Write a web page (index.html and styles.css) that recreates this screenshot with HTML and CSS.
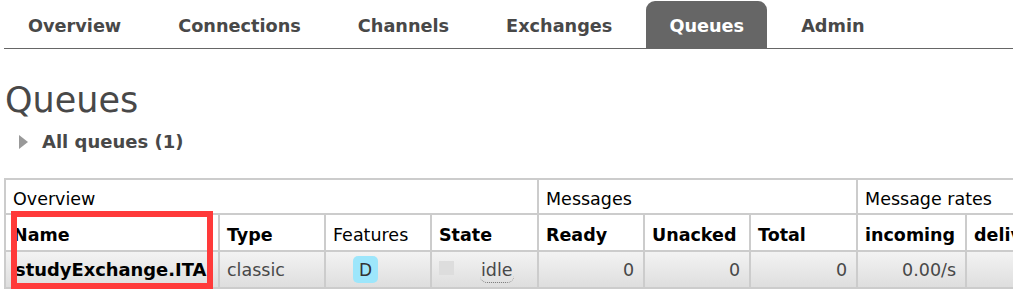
FILE: index.html
```html
<!DOCTYPE html>
<html lang="en">
<head>
  <meta charset="UTF-8" />
  <title>Queues</title>
  <link rel="stylesheet" href="styles.css">
</head>
<body>

  <ul class="tabs">
    <li>Overview</li>
    <li>Connections</li>
    <li>Channels</li>
    <li>Exchanges</li>
    <li class="active">Queues</li>
    <li>Admin</li>
  </ul>

  <h1>Queues</h1>

  <div class="section-title">
    <span class="arrow"></span>
    <span>All queues (1)</span>
  </div>

  <div class="table-wrap">
    <table class="queues">
      <colgroup>
        <col style="width:214px">
        <col style="width:106px">
        <col style="width:106px">
        <col style="width:107px">
        <col style="width:106px">
        <col style="width:106px">
        <col style="width:107px">
        <col style="width:109px">
        <col style="width:150px">
      </colgroup>
      <thead>
        <tr class="group">
          <th colspan="4">Overview</th>
          <th colspan="3">Messages</th>
          <th colspan="2">Message rates</th>
        </tr>
        <tr class="cols">
          <th>Name</th>
          <th>Type</th>
          <th class="plain">Features</th>
          <th>State</th>
          <th>Ready</th>
          <th>Unacked</th>
          <th>Total</th>
          <th>incoming</th>
          <th>deliver / get</th>
        </tr>
      </thead>
      <tbody>
        <tr>
          <td class="name">studyExchange.ITA</td>
          <td>classic</td>
          <td class="features"><span class="badge">D</span></td>
          <td class="state"><span class="dot"></span><abbr>idle</abbr></td>
          <td class="num">0</td>
          <td class="num">0</td>
          <td class="num">0</td>
          <td class="num">0.00/s</td>
          <td class="num"></td>
        </tr>
      </tbody>
    </table>
    <div class="highlight"></div>
  </div>

</body>
</html>
```

FILE: styles.css
```css
body {
  margin: 0;
  font-family: 'DejaVu Sans', Verdana, sans-serif;
  background-color: #ffffff;
  color: #484848;
  overflow: hidden;
}
.tabs {
  list-style: none;
  margin: 0 0 0 4px;
  padding: 1px 0 0 1px;
  display: flex;
  border-bottom: 1px solid #666;
  height: 47px;
}
.tabs li {
  padding: 3px 23px 0;
  margin-right: 11px;
  line-height: 44px;
  font-size: 17.7px;
  font-weight: bold;
  color: #484848;
  white-space: nowrap;
}
.tabs li.active {
  background-color: #666;
  color: #ffffff;
  border-radius: 9px 9px 0 0;
}
h1 {
  margin: 30px 0 0 5px;
  font-size: 35px;
  font-weight: normal;
  line-height: 42px;
  color: #484848;
}
.section-title {
  display: flex;
  align-items: center;
  gap: 14px;
  margin: 10px 0 0 19px;
  font-size: 18px;
  font-weight: bold;
  line-height: 22px;
}
.arrow {
  width: 0;
  height: 0;
  border-top: 7px solid transparent;
  border-bottom: 7px solid transparent;
  border-left: 9px solid #999;
}
.table-wrap {
  position: relative;
  margin: 25px 0 0 4px;
}
.queues {
  border-collapse: collapse;
  table-layout: fixed;
  width: 1111px;
  font-size: 17.5px;
}
.queues th, .queues td {
  border: 2px solid #ccc;
  text-align: left;
  white-space: nowrap;
  overflow: hidden;
  padding: 0 7px;
}
.queues th {
  color: #000;
}
.group th {
  font-weight: normal;
  height: 29px;
  padding-top: 4px;
}
.cols th {
  height: 31px;
  padding-top: 4px;
}
.cols th.plain {
  font-weight: normal;
}
.queues tbody td {
  height: 35px;
  background: linear-gradient(#f3f3f3, #dedede);
  color: #484848;
}
.queues td.name {
  color: #000;
  font-weight: bold;
  font-size: 17.9px;
  padding-left: 9px;
}
.queues td.num {
  text-align: right;
  padding-right: 9px;
}
.queues td.features {
  padding-left: 27px;
}
.badge {
  display: inline-block;
  width: 25px;
  height: 27px;
  line-height: 28px;
  text-align: center;
  border-radius: 5px;
  background-color: #9de6fb;
  color: #333;
  font-size: 17px;
  vertical-align: middle;
}
.state .dot {
  display: inline-block;
  width: 15px;
  height: 14px;
  background-color: #ddd;
  margin-right: 26px;
  vertical-align: 1px;
}
abbr {
  text-decoration: none;
  border-bottom: 1px dotted #777;
  border-radius: 0 0 7px 7px;
  padding: 0 1px 2px;
}
.highlight {
  position: absolute;
  left: 7px;
  top: 33px;
  width: 202px;
  height: 78px;
  box-sizing: border-box;
  border: 6px solid #ff3a3a;
}
```
